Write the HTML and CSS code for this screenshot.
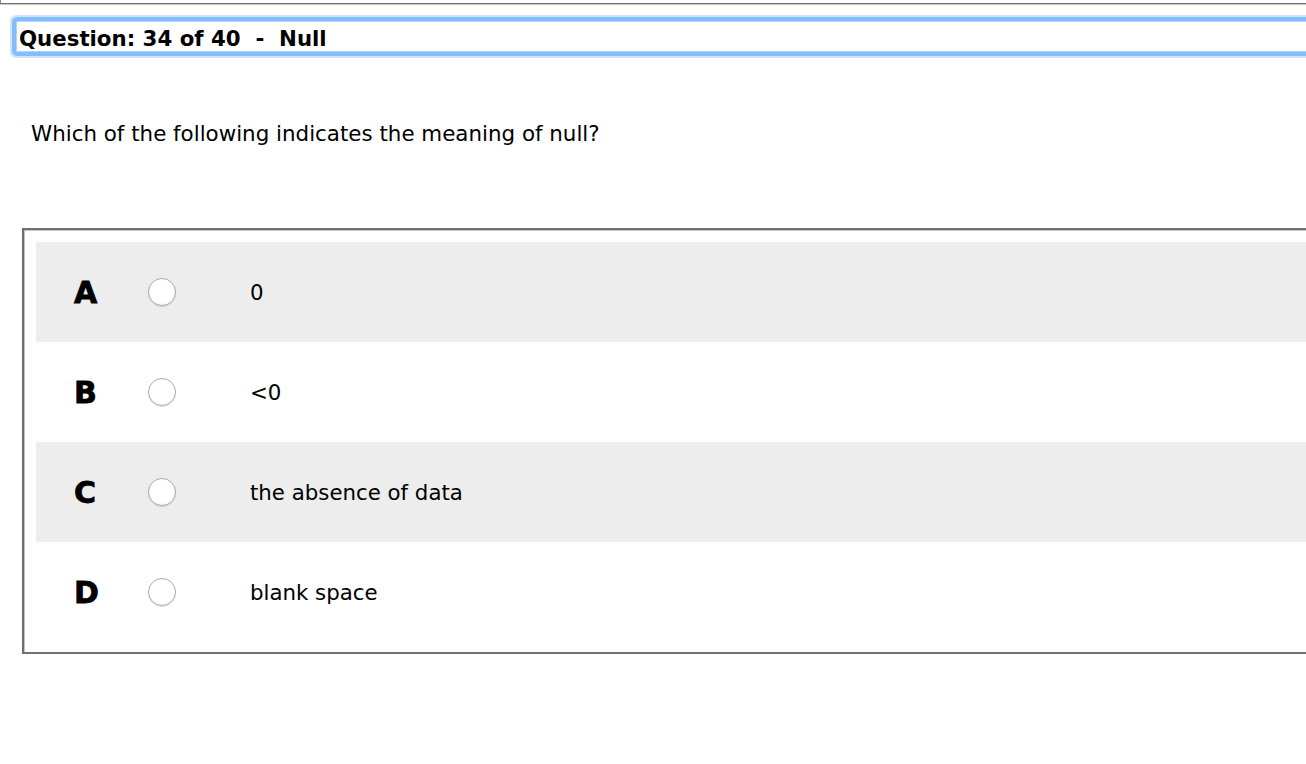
FILE: index.html
```html
<!DOCTYPE html>
<html>
<head>
<meta charset="utf-8">
<link rel="stylesheet" href="styles.css">
</head>
<body>
<div class="page">
  <div class="prevbar"></div>
  <div class="qbox">Question: 34 of 40&nbsp; -&nbsp; Null</div>
  <div class="qtext">Which of the following indicates the meaning of null?</div>
  <div class="answers">
    <div class="row shaded">
      <span class="letter">A</span>
      <span class="radio"></span>
      <span class="answer">0</span>
    </div>
    <div class="row">
      <span class="letter">B</span>
      <span class="radio"></span>
      <span class="answer">&lt;0</span>
    </div>
    <div class="row shaded">
      <span class="letter">C</span>
      <span class="radio"></span>
      <span class="answer">the absence of data</span>
    </div>
    <div class="row">
      <span class="letter">D</span>
      <span class="radio"></span>
      <span class="answer">blank space</span>
    </div>
  </div>
</div>
</body>
</html>
```
FILE: styles.css
```css
html, body {
  margin: 0;
  padding: 0;
  background: #fff;
  overflow: hidden;
}
.page {
  width: 1400px;
  font-family: "DejaVu Sans", Verdana, sans-serif;
  color: #000;
}
.prevbar {
  height: 3px;
  border-left: 1px solid #8a8a8a;
  border-bottom: 1px solid #6f6f6f;
  box-shadow: 0 1px 0 #c8c8c8;
}
.qbox {
  margin: 17px 0 0 16px;
  height: 27px;
  padding: 2px 0 0 2px;
  border: 1px solid #b5d3f7;
  border-radius: 2px;
  box-shadow: 0 0 0 4px #83bdfb, 0 0 0 6px #cfe3fb;
  font-weight: bold;
  font-size: 21.3px;
  line-height: 29px;
}
.qtext {
  margin-top: 70px;
  padding-left: 31px;
  font-size: 21.4px;
  line-height: 24px;
}
.answers {
  margin: 82px 0 0 22px;
  border: 2px solid #6f6f6f;
  box-shadow: inset 1px 1px 0 #c4c4c4, 0 1px 0 #c4c4c4;
  padding: 12px 0 10px 12px;
}
.row {
  height: 100px;
  display: flex;
  align-items: center;
  background: #fff;
}
.row.shaded {
  background: #ededed;
}
.letter {
  width: 112px;
  box-sizing: border-box;
  padding-left: 38px;
  font-weight: bold;
  font-size: 30px;
  -webkit-text-stroke: 0.8px #000;
}
.radio {
  width: 26px;
  height: 26px;
  border: 1px solid #aaa;
  border-radius: 50%;
  background: radial-gradient(circle at 50% 40%, #fff 60%, #f4f4f4 100%);
  box-shadow: 0 1px 1px rgba(0,0,0,0.12);
}
.answer {
  margin-left: 74px;
  font-size: 21.3px;
}
```
